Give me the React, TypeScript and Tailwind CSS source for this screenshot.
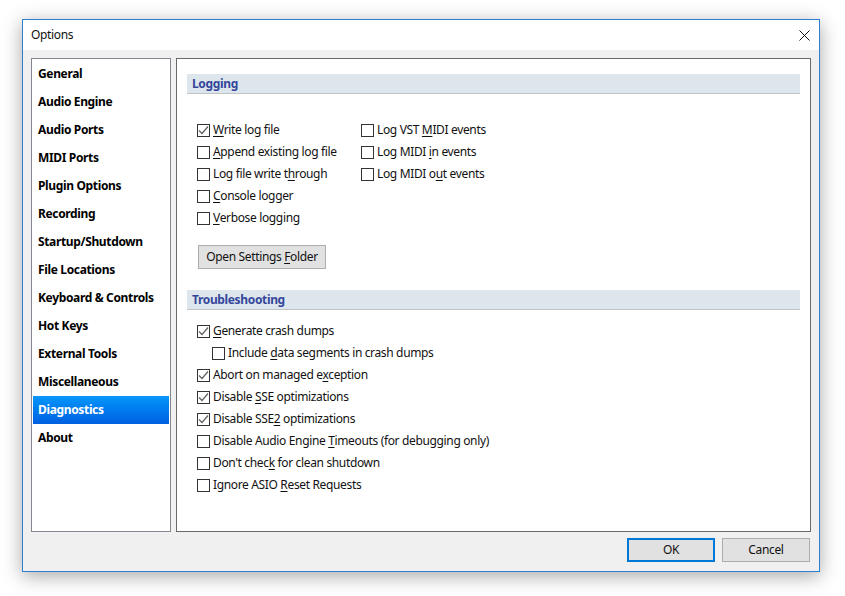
const navItems = [
  'General',
  'Audio Engine',
  'Audio Ports',
  'MIDI Ports',
  'Plugin Options',
  'Recording',
  'Startup/Shutdown',
  'File Locations',
  'Keyboard & Controls',
  'Hot Keys',
  'External Tools',
  'Miscellaneous',
  'Diagnostics',
  'About',
]

function Check({ label, u, checked }: { label: string; u?: number; checked?: boolean }) {
  return (
    <div className="flex h-[22px] items-center gap-[3px] whitespace-nowrap">
      <span className="flex h-[13px] w-[13px] shrink-0 items-center justify-center border border-[#333333] bg-white">
        {checked && (
          <svg width="11" height="11" viewBox="0 0 11 11" fill="none">
            <path d="M1 5.5 L4 8.5 L10 1.5" stroke="#606060" strokeWidth="1.2" />
          </svg>
        )}
      </span>
      <span>
        {u === undefined ? (
          label
        ) : (
          <>
            {label.slice(0, u)}
            <u className="underline-offset-2">{label[u]}</u>
            {label.slice(u + 1)}
          </>
        )}
      </span>
    </div>
  )
}

function Section({ title }: { title: string }) {
  return (
    <div className="flex h-5 items-center border-b border-[#bfc3c6] bg-[#dde6ed] pl-[5px] pt-px font-bold text-[#34479b]">
      {title}
    </div>
  )
}

export default function App() {
  return (
    <div className="h-[596px] w-[845px] overflow-hidden bg-white pl-[22px] pt-[19px] font-['Noto_Sans','Open_Sans',sans-serif] text-[12px] tracking-[-0.35px] text-[#111111]">
      <div className="flex h-[553px] w-[798px] flex-col border border-[#2b7fcc] bg-[#f0f0f0] shadow-[0_4px_18px_rgba(0,0,0,0.35)]">
        <div className="flex h-[30px] shrink-0 items-center justify-between bg-white pl-2 pr-[9px]">
          <span>Options</span>
          <svg width="11" height="11" viewBox="0 0 11 11" fill="none">
            <path d="M0.5 0.5 L10.5 10.5 M10.5 0.5 L0.5 10.5" stroke="#111111" strokeWidth="1" />
          </svg>
        </div>
        <div className="flex flex-1 gap-[5px] px-2 pt-2">
          <div className="h-[474px] w-[140px] shrink-0 border border-[#828790] bg-white p-px">
            {navItems.map((item) => (
              <div
                key={item}
                className={
                  item === 'Diagnostics'
                    ? 'flex h-7 items-center bg-gradient-to-b from-[#0a96fb] to-[#005fe0] pl-[5px] font-bold text-white'
                    : 'flex h-7 items-center pl-[5px] font-bold text-black'
                }
              >
                {item}
              </div>
            ))}
          </div>
          <div className="h-[474px] w-[635px] shrink-0 border border-[#696969] bg-white pl-[10px] pr-[10px] pt-[15px]">
            <Section title="Logging" />
            <div className="flex pl-[10px] pt-[25px]">
              <div className="w-[164px]">
                <Check label="Write log file" u={0} checked />
                <Check label="Append existing log file" u={0} />
                <Check label="Log file write through" u={16} />
                <Check label="Console logger" u={0} />
                <Check label="Verbose logging" u={0} />
              </div>
              <div>
                <Check label="Log VST MIDI events" u={8} />
                <Check label="Log MIDI in events" u={9} />
                <Check label="Log MIDI out events" u={10} />
              </div>
            </div>
            <button className="ml-[11px] mt-4 flex h-6 w-[128px] items-center justify-center border border-[#adadad] bg-[#e1e1e1]">
              <span>
                Open Settings <u className="underline-offset-2">F</u>older
              </span>
            </button>
            <div className="mt-[21px]">
              <Section title="Troubleshooting" />
            </div>
            <div className="pl-[10px] pt-[10px]">
              <Check label="Generate crash dumps" u={0} checked />
              <div className="pl-[15px]">
                <Check label="Include data segments in crash dumps" u={8} />
              </div>
              <Check label="Abort on managed exception" u={18} checked />
              <Check label="Disable SSE optimizations" u={8} checked />
              <Check label="Disable SSE2 optimizations" u={11} checked />
              <Check label="Disable Audio Engine Timeouts (for debugging only)" u={21} />
              <Check label="Don't check for clean shutdown" u={10} />
              <Check label="Ignore ASIO Reset Requests" u={12} />
            </div>
          </div>
        </div>
        <div className="flex justify-end gap-[7px] pb-[9px] pr-[9px] pt-[6px]">
          <button className="h-6 w-[88px] border-2 border-[#0078d7] bg-[#e1e1e1]">OK</button>
          <button className="h-6 w-[88px] border border-[#adadad] bg-[#e1e1e1]">Cancel</button>
        </div>
      </div>
    </div>
  )
}
